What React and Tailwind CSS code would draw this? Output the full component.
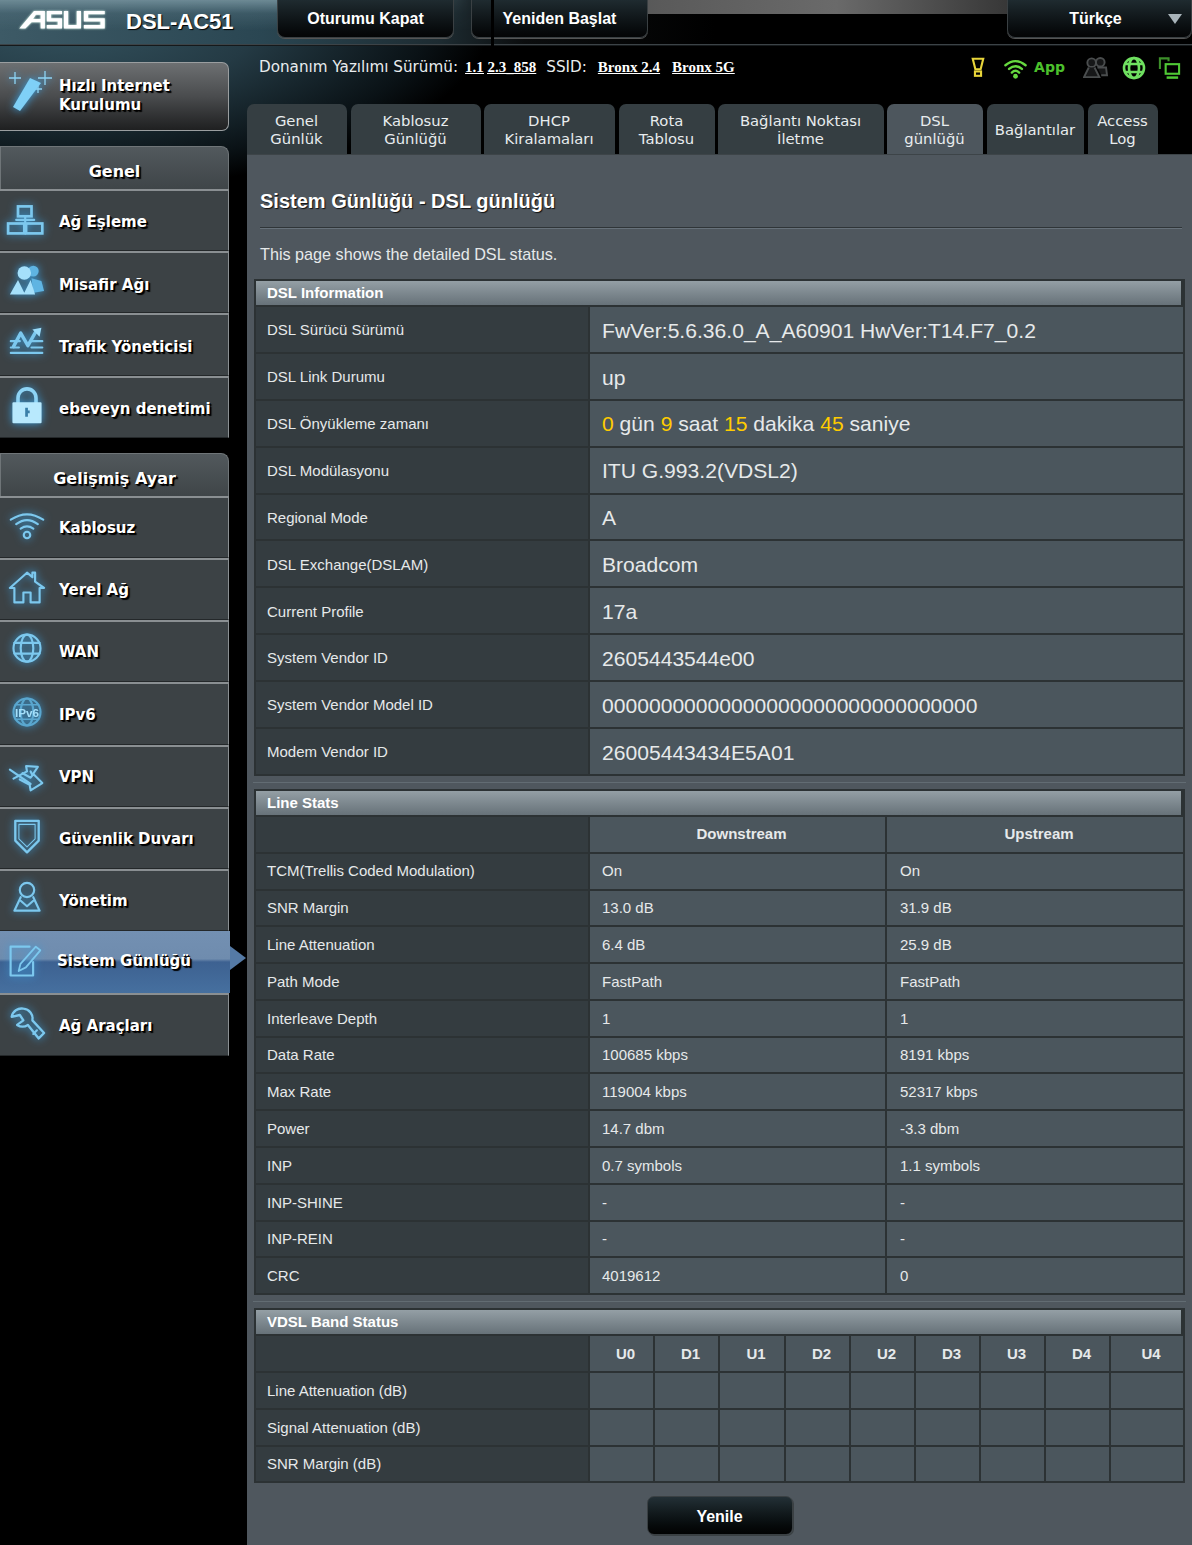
import React from 'react';

const glow = 'drop-shadow-[0_0_4px_#3aa0e0]';
const Ico = ({ children, className = 'w-[36px] h-[36px]', vb = '0 0 40 40' }) => (
  <svg viewBox={vb} className={`shrink-0 overflow-visible ${glow} ${className}`} fill="none" stroke="#7cc8ee" strokeWidth="2.4" strokeLinecap="round" strokeLinejoin="round">{children}</svg>
);

const IWand = () => (
  <Ico className="w-[46px] h-[46px]" vb="0 0 46 46">
    <path d="M1 8h12M7 2v12M30 8h14M37 1v14M26 19h8M30 15v8" stroke="#8ed4f5" strokeWidth="1.3" strokeLinecap="butt" />
    <path d="M22 8 L33 13 L12 41 L5 37 Z" fill="#7fd0f7" stroke="none" />
  </Ico>
);
const INet = () => (
  <Ico>
    <rect x="10" y="6" width="15" height="11" strokeWidth="3" strokeLinejoin="miter" />
    <path d="M18 17v7M8 21h20" strokeWidth="2.4" />
    <rect x="-1" y="25" width="18" height="11" strokeWidth="3" strokeLinejoin="miter" />
    <rect x="19" y="25" width="18" height="11" strokeWidth="3" strokeLinejoin="miter" />
  </Ico>
);
const IGuest = () => (
  <Ico>
    <circle cx="27" cy="9" r="6" fill="#5fb4e2" stroke="none" />
    <path d="M25 17 L36 20 L39 31 L27 33 Z" fill="#5fb4e2" stroke="none" />
    <circle cx="17" cy="11" r="7.5" fill="#a5e0fb" stroke="none" />
    <path d="M10 19 L17 33 L24 19 L29 35 L1 35 Z" fill="#a5e0fb" stroke="none" />
  </Ico>
);
const ITraffic = () => (
  <Ico>
    <path d="M5 24 L13 9 L21 23 L30 7" strokeWidth="3.8" />
    <path d="M26 5 L36 3 L34 13 Z" fill="#9adcfa" stroke="none" />
    <path d="M2 18h10M24 18h13M2 25h9M25 25h12M2 31h35" strokeWidth="2.4" />
  </Ico>
);
const ILock = () => (
  <Ico>
    <path d="M10 17v-6a10 10 0 0 1 20 0v6" strokeWidth="4" stroke="#8ed4f5" />
    <path d="M5 17h30v21H5z" fill="#b8e9fd" stroke="#b8e9fd" />
    <path d="M18 22h3v3h2v3h-2v4h-3z" fill="#3a7fa8" stroke="none" />
  </Ico>
);
const IWifi = () => (
  <Ico>
    <path d="M2 13 Q20 1 38 13M8 18 Q20 9 32 18M13 23 Q20 18 27 23" />
    <circle cx="20" cy="30" r="3.6" />
  </Ico>
);
const IHome = () => (
  <Ico>
    <path d="M1 20 L20 3 L26 8 V3 H29 V13 L39 20 H34 V36 H24 V25 H16 V36 H6 V20 Z" />
  </Ico>
);
const IGlobe = () => (
  <Ico>
    <circle cx="20" cy="18" r="15" />
    <ellipse cx="20" cy="18" rx="7" ry="15" />
    <path d="M6 12h28M6 24h28" />
  </Ico>
);
const IV6 = () => (
  <Ico>
    <circle cx="20" cy="20" r="15" stroke="#5aa7cf" />
    <ellipse cx="20" cy="20" rx="7" ry="15" stroke="#5aa7cf" />
    <path d="M7 12h26M7 28h26" stroke="#5aa7cf" strokeWidth="1.6" />
    <text x="20" y="25" textAnchor="middle" fontSize="13" fontWeight="bold" fontFamily="Liberation Sans, sans-serif" fill="#a5e0fb" stroke="none">IPv6</text>
  </Ico>
);
const IVpn = () => (
  <Ico>
    <path d="M1 14 L24 30" />
    <path d="M5 24 L20 16 L19 10 L32 11 L26 20 L24 16" />
    <path d="M15 18 L24 23 L27 19 L37 29 L24 37 L23 31 L12 25" />
  </Ico>
);
const IShield = () => (
  <Ico>
    <path d="M7 2 H33 V24 L20 37 L7 24 Z" strokeWidth="2.6" />
    <path d="M11 6 H29 V22 L20 31 L11 22 Z" strokeWidth="1.2" />
  </Ico>
);
const IUser = () => (
  <Ico>
    <circle cx="20" cy="10" r="8" />
    <path d="M13 18 L6 33 H34 L27 18 M13 22 L20 28 L27 22" />
  </Ico>
);
const INote = () => (
  <Ico>
    <path d="M25 3 H4 V35 H29 V20" />
    <path d="M13 30 L15 22 L32 3 L37 7 L21 26 Z" strokeWidth="2" />
  </Ico>
);
const IWrench = () => (
  <Ico>
    <path d="M16 3 A11 11 0 0 0 3 12 L12 10 L16 16 L9 21 A11 11 0 0 0 21 21 L33 36 L39 30 L26 16 A11 11 0 0 0 16 3 Z" strokeWidth="2.6" />
    <path d="M31 27 L27 31" />
  </Ico>
);

const Asus = () => (
  <svg viewBox="0 0 90 20" className="w-[90px] h-[19px] drop-shadow-[0_0_1px_#dfe]" fill="#fff">
    <path fillRule="evenodd" d="M0 19.500 15.500 1H27V19.500H22.500V13H13L6.500 19.500ZM17.500 5H22.500V9.500H14.500Z" />
    <path d="M29 1h16v3.600H33.500v4h11.500v10.900H29v-3.600h11.500v-3.700H29z" />
    <path d="M47 1h4.500v14.900h9V1H65v18.500H47z" />
    <path d="M68 1h22v3.600H72.500v4H90v10.900H68v-3.600h17.500v-3.700H68z" />
  </svg>
);

const HdrBtn = ({ children, className = '' }) => (
  <div className={`h-[38px] rounded-b-[8px] border border-t-0 border-[#3a4043] bg-gradient-to-b from-[#1f2b30] to-[#040506] flex items-center justify-center text-white font-bold text-[16px] shadow-[0_1px_0_#555] ${className}`}>{children}</div>
);

const sideText = "text-white font-bold text-[15px] [font-family:DejaVu_Sans,sans-serif] [text-shadow:1px_1px_0_#000,2px_2px_1px_#000]";

const MenuItem = ({ icon, label, h = 'h-[62.2px]', text = 'mt-[2px]' }) => (
  <div className={`${h} bg-[#3c4245] border-t-2 border-t-[#8a8f92] border-b border-b-[#24282a] border-r border-r-[#8a8f92] flex items-center pl-[9px]`}>
    <span className="w-[50px] shrink-0 -mt-[3px]">{icon}</span>
    <span className={`${sideText} ${text}`}>{label}</span>
  </div>
);

const SectionHead = ({ children, className = 'pt-[7px]' }) => (
  <div className={`h-[43px] rounded-tr-[8px] border border-b-0 border-[#6f7578] bg-gradient-to-b from-[#52595d] to-[#3f4548] flex items-center justify-center ${sideText} text-[16px] ${className}`}>{children}</div>
);

const general = [
  [<INet />, 'Ağ Eşleme'],
  [<IGuest />, 'Misafir Ağı'],
  [<ITraffic />, 'Trafik Yöneticisi'],
  [<ILock />, 'ebeveyn denetimi'],
];
const adv1 = [
  [<IWifi />, 'Kablosuz'],
  [<IHome />, 'Yerel Ağ'],
  [<IGlobe />, 'WAN'],
  [<IV6 />, 'IPv6'],
  [<IVpn />, 'VPN'],
  [<IShield />, 'Güvenlik Duvarı'],
  [<IUser />, 'Yönetim'],
];

const Sidebar = () => (
  <aside className="w-[229px] shrink-0 pt-[17px]">
    <div className="h-[69px] rounded-r-[7px] border border-l-0 border-[#9a9ea0] bg-gradient-to-b from-[#6d7072] via-[#4a4c4e] to-[#1f2021] flex items-center pl-[8px]">
      <span className="w-[51px] shrink-0 -mt-[8px]"><IWand /></span>
      <span className={`${sideText} leading-[19px] -mt-[2px]`}>Hızlı Internet<br />Kurulumu</span>
    </div>
    <div className="mt-[15px]">
      <SectionHead>Genel</SectionHead>
      {general.map(([i, l]) => <MenuItem key={l} icon={i} label={l} text="mt-[4px]" />)}
    </div>
    <div className="mt-[15px]">
      <SectionHead className="pt-[9px]">Gelişmiş Ayar</SectionHead>
      {adv1.map(([i, l]) => <MenuItem key={l} icon={i} label={l} />)}
      <div className="relative h-[62px] w-[230px] bg-[linear-gradient(#7390b2_0%,#6f8cae_45%,#3d6191_50%,#46709f_100%)] flex items-center pl-[7px]">
        <span className="w-[50px] shrink-0"><INote /></span>
        <span className={`${sideText} -mt-[1px]`}>Sistem Günlüğü</span>
        <span className="absolute left-[230px] top-[15px] w-0 h-0 border-y-[12px] border-y-transparent border-l-[16px] border-l-[#557aa5]" />
      </div>
      <MenuItem icon={<IWrench />} label="Ağ Araçları" h="h-[63px]" />
    </div>
  </aside>
);

const tabs = [
  ['w-[100px] mr-[4px]', <>Genel<br />Günlük</>],
  ['w-[130px] mr-[3px]', <>Kablosuz<br />Günlüğü</>],
  ['w-[131px] mr-[4px]', <>DHCP<br />Kiralamaları</>],
  ['w-[96px] mr-[3px]', <>Rota<br />Tablosu</>],
  ['w-[166px] mr-[3px]', <>Bağlantı Noktası<br />İletme</>],
  ['w-[96px] mr-[4px]', <>DSL<br />günlüğü</>, true],
  ['w-[97px] mr-[4px]', <>Bağlantılar</>],
  ['w-[70px]', <>Access<br />Log</>],
];

const Tabs = () => (
  <div className="flex h-[50px]">
    {tabs.map(([w, t, active], i) => (
      <div key={i} className={`${w} rounded-t-[7px] flex items-center justify-center text-center pt-[2px] pr-[1px] text-[14.8px] leading-[18px] text-[#e8ecee] [font-family:DejaVu_Sans,sans-serif] ${active ? 'bg-[#4d565d]' : 'bg-[#353e42]'}`}>
        <span>{t}</span>
      </div>
    ))}
  </div>
);

const TitleBar = ({ children }) => (
  <div className="h-[28px] border-2 border-[#2c3234] bg-gradient-to-b from-[#949fa5] to-[#677279] flex items-center pl-[11px] text-[15px] font-bold text-white">{children}</div>
);

const Row = ({ h, children }) => <div className={`flex ${h} border-b-2 border-[#2c3234]`}>{children}</div>;
const Lab = ({ children, className = 'pt-[1px]' }) => <div className={`w-[334px] shrink-0 bg-[#343c40] border-l-2 border-[#2c3234] flex items-center pl-[11px] text-[#e6e9ea] text-[15px] ${className}`}>{children}</div>;
const Val = ({ children, className = '' }) => <div className={`bg-[#4b565d] border-l-2 border-[#2c3234] flex items-center text-[#e6e9ea] ${className}`}>{children}</div>;

const Y = ({ children }) => <span className="text-[#fc0]">{children}</span>;

const info = [
  ['DSL Sürücü Sürümü', 'FwVer:5.6.36.0_A_A60901 HwVer:T14.F7_0.2'],
  ['DSL Link Durumu', 'up'],
  ['DSL Önyükleme zamanı', <><Y>0</Y> gün <Y>9</Y> saat <Y>15</Y> dakika <Y>45</Y> saniye</>],
  ['DSL Modülasyonu', 'ITU G.993.2(VDSL2)'],
  ['Regional Mode', 'A'],
  ['DSL Exchange(DSLAM)', 'Broadcom'],
  ['Current Profile', '17a'],
  ['System Vendor ID', '2605443544e00'],
  ['System Vendor Model ID', '00000000000000000000000000000000'],
  ['Modem Vendor ID', '26005443434E5A01'],
];

const stats = [
  ['TCM(Trellis Coded Modulation)', 'On', 'On'],
  ['SNR Margin', '13.0 dB', '31.9 dB'],
  ['Line Attenuation', '6.4 dB', '25.9 dB'],
  ['Path Mode', 'FastPath', 'FastPath'],
  ['Interleave Depth', '1', '1'],
  ['Data Rate', '100685 kbps', '8191 kbps'],
  ['Max Rate', '119004 kbps', '52317 kbps'],
  ['Power', '14.7 dbm', '-3.3 dbm'],
  ['INP', '0.7 symbols', '1.1 symbols'],
  ['INP-SHINE', '-', '-'],
  ['INP-REIN', '-', '-'],
  ['CRC', '4019612', '0'],
];

const bands = ['U0', 'D1', 'U1', 'D2', 'U2', 'D3', 'U3', 'D4', 'U4'];
const bandW = ['w-[65px]', 'w-[65px]', 'w-[66px]', 'w-[65px]', 'w-[65px]', 'w-[65px]', 'w-[65px]', 'w-[65px]', 'w-[74px]'];

const Section = ({ title, children, className = '' }) => (
  <section className={`border-r-2 border-[#2c3234] ${className}`}>
    <TitleBar>{title}</TitleBar>
    {children}
  </section>
);

const Sep = () => <div className="h-[13px] flex items-center -mx-[1px]"><div className="w-full h-px bg-[#626c73]" /></div>;

const Panel = () => (
  <div className="bg-[#4f575e] h-[1391px] border-t border-[#3d4448] pl-[7px] pr-[7px]">
    <h1 className="pl-[6px] mt-[34px] text-[20px] leading-[24px] font-bold text-white [text-shadow:1px_1px_1px_#111]">Sistem Günlüğü - DSL günlüğü</h1>
    <div className="ml-[6px] mr-[3px] mt-[14px] h-[2px] border-t border-[#2f3538] bg-[#67717a]" />
    <p className="pl-[6px] mt-[15px] text-[16.2px] leading-[20px] text-[#e6e9ea]">This page shows the detailed DSL status.</p>
    <Section title="DSL Information" className="mt-[15px]">
      {info.map(([l, v]) => (
        <Row key={l} h="h-[46.9px]">
          <Lab className="pt-[2px]">{l}</Lab>
          <Val className="flex-1 pl-[12px] pt-[2px] text-[21.1px]"><span>{v}</span></Val>
        </Row>
      ))}
    </Section>
    <Sep />
    <Section title="Line Stats">
      <Row h="h-[36.8px]">
        <Lab />
        <Val className="w-[297px] justify-center pl-[8px] text-[15px] font-bold">Downstream</Val>
        <Val className="flex-1 justify-center pl-[8px] text-[15px] font-bold">Upstream</Val>
      </Row>
      {stats.map(([l, a, b]) => (
        <Row key={l} h="h-[36.8px]">
          <Lab>{l}</Lab>
          <Val className="w-[297px] pl-[12px] pt-[1px] text-[15px]">{a}</Val>
          <Val className="flex-1 pl-[13px] pt-[1px] text-[15px]">{b}</Val>
        </Row>
      ))}
    </Section>
    <Sep />
    <Section title="VDSL Band Status">
      <Row h="h-[36.8px]">
        <Lab />
        {bands.map((b, i) => <Val key={b} className={`${bandW[i]} justify-center pl-[8px] pt-[2px] text-[15px] font-bold`}>{b}</Val>)}
      </Row>
      {['Line Attenuation (dB)', 'Signal Attenuation (dB)', 'SNR Margin (dB)'].map((l) => (
        <Row key={l} h="h-[36.8px]">
          <Lab>{l}</Lab>
          {bands.map((b, i) => <Val key={b} className={bandW[i]} />)}
        </Row>
      ))}
    </Section>
    <div className="flex justify-center mt-[13px]">
      <div className="w-[146px] h-[39px] pt-[3px] rounded-[7px] border border-[#3a4043] bg-gradient-to-b from-[#233036] to-[#020303] shadow-[1px_1px_0_#3a4043] flex items-center justify-center text-white font-bold text-[16px]">Yenile</div>
    </div>
  </div>
);

const StatusIcons = () => (
  <div className="flex items-center ml-auto mr-[11px]">
    <svg viewBox="0 0 16 24" className="w-[14px] h-[21px]" fill="none" stroke="#e8d53a" strokeWidth="2.4">
      <path d="M2 2h12l-3 12H5z" />
      <rect x="4.500" y="16.500" width="7" height="5" />
    </svg>
    <svg viewBox="0 0 26 24" className="w-[25px] h-[22px] ml-[18px]" fill="none" stroke="#66d93f" strokeWidth="2.6" strokeLinecap="round">
      <path d="M2 9 Q13 0 24 9M6 13 Q13 7 20 13M9 17 Q13 13 17 17" />
      <circle cx="13" cy="21" r="2.6" fill="#66d93f" stroke="none" />
    </svg>
    <span className="ml-[6px] text-[14px] font-bold text-[#4cc02c] [font-family:DejaVu_Sans,sans-serif]">App</span>
    <svg viewBox="0 0 26 24" className="w-[25px] h-[23px] ml-[18px]" fill="#161718" stroke="#4a4d4e" strokeWidth="2">
      <circle cx="18" cy="6.500" r="4.5" /><path d="M15 12 L24 12 L25 20 H19" />
      <circle cx="9" cy="7" r="4.5" />
      <path d="M6 12 L1 22 H17 L12 12" />
    </svg>
    <svg viewBox="0 0 24 24" className="w-[24px] h-[24px] ml-[14px]" fill="none" stroke="#6fe060" strokeWidth="2.6">
      <circle cx="12" cy="12" r="10" />
      <ellipse cx="12" cy="12" rx="5" ry="10" />
      <path d="M3 8h18M3 16h18" />
    </svg>
    <svg viewBox="0 0 24 24" className="w-[23px] h-[24px] ml-[12px]" fill="none" stroke="#4fc935" strokeWidth="2.2">
      <path d="M2 13V2h9v3" stroke="#3d8f2a" />
      <rect x="8" y="8" width="14" height="10" />
      <path d="M9 22h12" strokeWidth="2.6" />
    </svg>
  </div>
);

const u = "font-bold underline text-white text-[15px] [font-family:Liberation_Serif,serif]";

export default function App() {
  return (
    <div className="relative w-[1192px] h-[1545px] overflow-hidden bg-black [font-family:Liberation_Sans,sans-serif] bg-[radial-gradient(ellipse_420px_170px_at_70px_20px,#34535f_0%,#243a44_45%,#0a1216_85%,transparent_100%)]">
      <header className="relative h-[45px] border-b border-[#3c4347] shadow-[0_1px_0_#15191b] flex bg-[linear-gradient(90deg,#3d5a66_0%,#2a4652_22%,#1d2b31_37%,#0b0d0e_44%,#000_60%,#000_100%)]">
        <div className="absolute left-0 top-0 w-[480px] h-[44px] bg-[linear-gradient(180deg,#6d8a95_0%,#4f6d7a80_30%,#36576400_70%)] [mask-image:linear-gradient(90deg,#000_70%,transparent)]" />
        <div className="absolute left-[480px] right-0 top-0 h-[14px] bg-[linear-gradient(90deg,#3a4347_0%,#5a5a5a_25%,#6a6a6a_50%,#2f2f2f_78%,#1a1a1a_100%)]" />
        <div className="relative flex items-start w-full">
          <span className="w-[126px] shrink-0 pl-[17px] pt-[10px]"><Asus /></span>
          <span className="w-[151px] shrink-0 pt-[9px] text-[22px] leading-[26px] font-bold text-white [text-shadow:1px_1px_1px_#000]">DSL-AC51</span>
          <HdrBtn className="w-[177px]">Oturumu Kapat</HdrBtn>
          <HdrBtn className="ml-[17px] w-[177px]">Yeniden Başlat</HdrBtn>
          <HdrBtn className="relative ml-auto w-[185px] pr-[8px]">
            Türkçe
            <span className="absolute right-[9px] top-[14px] w-0 h-0 border-x-[7px] border-x-transparent border-t-[10px] border-t-[#a9b4ba]" />
          </HdrBtn>
        </div>
      </header>
      <div className="flex">
        <Sidebar />
        <main className="ml-[18px] flex-1 min-w-0">
          <div className="h-[44px] flex items-center pl-[12px] pt-[1px] text-[15.2px] text-[#e8ecee] [font-family:DejaVu_Sans,sans-serif]">
            <span>Donanım Yazılımı Sürümü:</span>
            <span className={`${u} ml-[7px]`}>1.1.2.3_858</span>
            <span className="ml-[10px]">SSID:</span>
            <span className={`${u} ml-[11px]`}>Bronx 2.4</span>
            <span className={`${u} ml-[12px]`}>Bronx 5G</span>
            <StatusIcons />
          </div>
          <div className="h-[15px]" />
          <Tabs />
          <Panel />
        </main>
      </div>
      <div className="absolute left-[491px] top-0 w-[3px] h-[57px] bg-black" />
      <div className="absolute left-[484px] top-[57px] w-[3px] h-[22px] bg-black" />
    </div>
  );
}
